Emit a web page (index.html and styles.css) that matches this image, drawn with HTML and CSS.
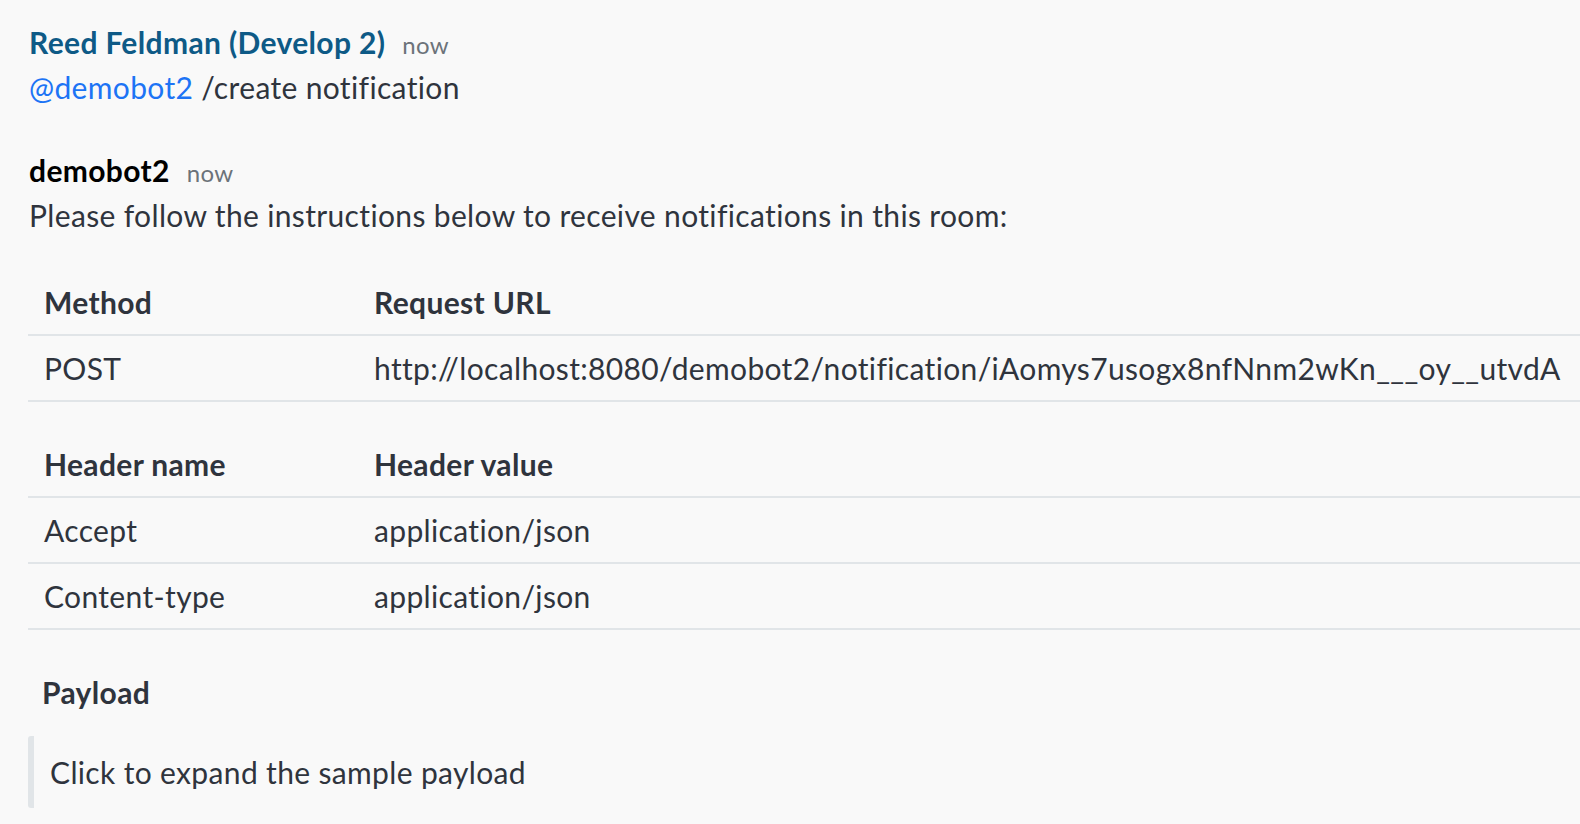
FILE: index.html
```html
<!DOCTYPE html>
<html>
<head>
<meta charset="utf-8">
<link rel="stylesheet" href="styles.css">
</head>
<body>
<div class="messages">
  <div class="message">
    <div class="header"><span class="name user">Reed Feldman (Develop 2)</span><span class="time">now</span></div>
    <div class="body"><span class="mention">@demobot2</span> /create notification</div>
  </div>
  <div class="message bot">
    <div class="header"><span class="name">demobot2</span><span class="time">now</span></div>
    <div class="body">Please follow the instructions below to receive notifications in this room:</div>
    <table class="tbl">
      <thead><tr><th class="c1">Method</th><th>Request URL</th></tr></thead>
      <tbody><tr><td class="c1">POST</td><td>http://localhost:8080/demobot2/notification/iAomys7usogx8nfNnm2wKn___oy__utvdA</td></tr></tbody>
    </table>
    <table class="tbl second">
      <thead><tr><th class="c1">Header name</th><th>Header value</th></tr></thead>
      <tbody>
        <tr><td class="c1">Accept</td><td>application/json</td></tr>
        <tr><td class="c1">Content-type</td><td>application/json</td></tr>
      </tbody>
    </table>
    <div class="payload-title">Payload</div>
    <blockquote class="quote">Click to expand the sample payload</blockquote>
  </div>
</div>
</body>
</html>
```
FILE: styles.css
```css
html, body {
  margin: 0;
  padding: 0;
  background: #f9f9f9;
}
body {
  font-family: Lato, "Noto Sans", sans-serif;
  color: #2f343d;
  font-size: 30px;
  letter-spacing: 0.35px;
}
.messages {
  padding: 20px 0 0 28px;
}
.message {
  margin-bottom: 39px;
}
.header {
  display: flex;
  align-items: baseline;
  gap: 17px;
  padding-left: 1px;
  line-height: 44px;
}
.name {
  font-weight: 700;
  font-size: 30px;
  color: #000;
}
.name.user {
  color: #0e5a86;
}
.time {
  font-size: 24px;
  color: #6c737a;
}
.body {
  padding-left: 1px;
  line-height: 44px;
  font-size: 30px;
  margin-top: -2px;
}
.mention {
  color: #1d74f5;
}
.tbl {
  border-collapse: collapse;
  width: 100%;
  margin-top: 33px;
}
.tbl th, .tbl td {
  text-align: left;
  padding: 13px 16px;
  line-height: 38px;
  border-bottom: 2px solid #e1e5e8;
  font-size: 30px;
}
.tbl th {
  font-weight: 700;
}
.tbl .c1 {
  width: 298px;
}
.tbl.second {
  margin-top: 30px;
}
.payload-title {
  font-weight: 700;
  font-size: 30px;
  margin: 42px 0 0 14px;
  line-height: 40px;
}
.quote {
  margin: 24px 0 0 0;
  border-left: 6px solid #e1e5e8;
  border-radius: 3px;
  padding: 15px 16px;
  line-height: 42px;
  font-size: 30px;
}
```
